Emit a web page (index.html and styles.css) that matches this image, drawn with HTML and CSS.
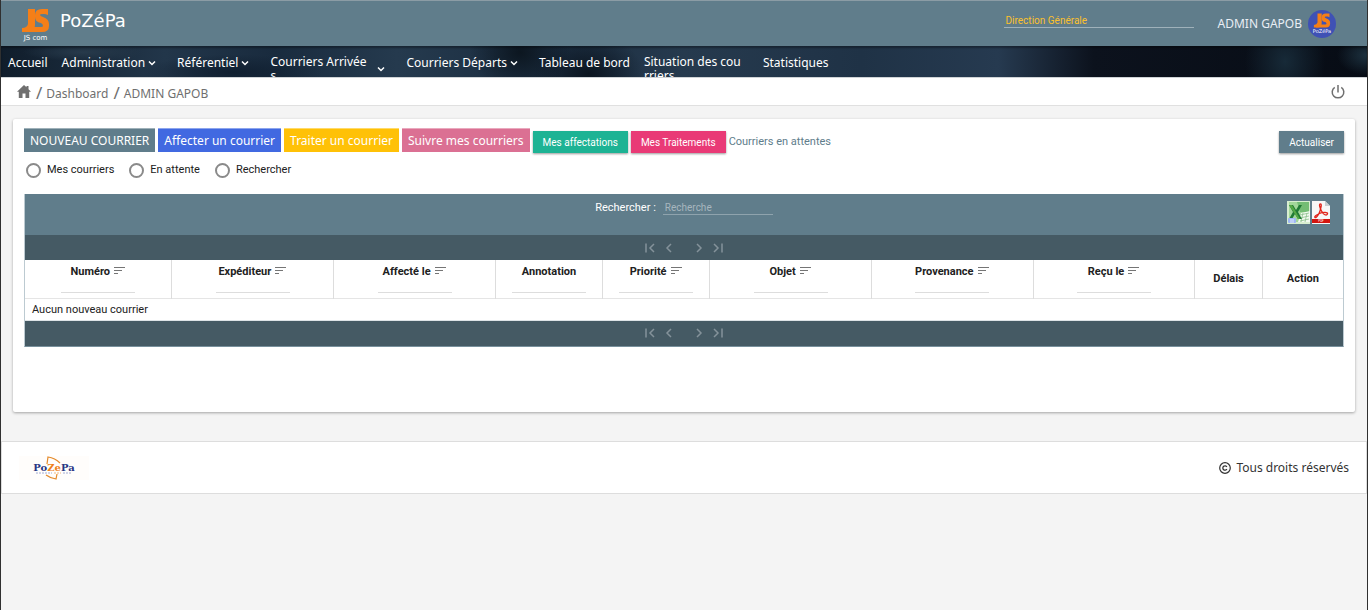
FILE: index.html
```html
<!DOCTYPE html>
<html lang="fr">
<head>
<meta charset="utf-8">
<meta name="viewport" content="width=device-width, initial-scale=1">
<title>PoZéPa</title>
<link rel="stylesheet" href="styles.css">
</head>
<body class="page">
<svg class="defs" aria-hidden="true">
  <symbol id="js" viewBox="0 0 27 25">
    <path d="M6 1h7v16q0 7-7 7H0v-4q5 0 6-4z"/>
    <path d="M26 7V1h-6q-7 0-7 6v2q0 5 6 6 2 1 2 3 0 1-2 1H8l-5 5h17q7 0 7-6v-2q0-5-6-7-3-1-3-2t2-1h3z"/>
  </symbol>
  <symbol id="chevron" viewBox="0 0 8 8"><path d="M1 2.500l3 3 3-3" fill="none" stroke="currentColor" stroke-width="1.500"/></symbol>
  <symbol id="sort" viewBox="0 0 12 8"><path d="M0 .500h11M0 3.500h8M0 6.500h4" fill="none" stroke="currentColor" stroke-width="1"/></symbol>
  <symbol id="first" viewBox="0 0 10 10"><path d="M1 .500v9M9 1L5 5l4 4" fill="none" stroke="currentColor" stroke-width="1.500"/></symbol>
  <symbol id="prev" viewBox="0 0 10 10"><path d="M7 1L3 5l4 4" fill="none" stroke="currentColor" stroke-width="1.500"/></symbol>
</svg>

<header class="topbar">
  <a class="brand" href="#">
    <span class="brand-mark"><svg class="brand-icon"><use href="#js"/></svg><span class="brand-sub">JS com</span></span>
    <span class="brand-name">PoZéPa</span>
  </a>
  <div class="account">
    <input class="direction" type="text" value="Direction Générale" aria-label="Direction">
    <span class="user">ADMIN GAPOB</span>
    <span class="avatar"><svg class="avatar-icon"><use href="#js"/></svg><span class="avatar-text">PoZéPa</span></span>
  </div>
</header>

<nav class="menu">
  <a class="menu-item" href="#">Accueil</a>
  <a class="menu-item has-sub" href="#">Administration<svg class="chevron"><use href="#chevron"/></svg></a>
  <a class="menu-item has-sub" href="#">Référentiel<svg class="chevron"><use href="#chevron"/></svg></a>
  <a class="menu-item has-sub" href="#"><span class="menu-wrap">Courriers Arrivées</span><svg class="chevron chevron-low"><use href="#chevron"/></svg></a>
  <a class="menu-item has-sub" href="#">Courriers Départs<svg class="chevron"><use href="#chevron"/></svg></a>
  <a class="menu-item" href="#">Tableau de bord</a>
  <a class="menu-item" href="#"><span class="menu-wrap">Situation des courriers</span></a>
  <a class="menu-item menu-last" href="#">Statistiques</a>
</nav>

<div class="crumbs">
  <a class="crumb-home" href="#" aria-label="Accueil"><svg class="home" viewBox="0 0 14 13"><path fill="currentColor" d="M7 0l2.500 2.300V1h2v3.200L14 6.700h-1.800V13H8.500V8.500h-3V13H1.800V6.700H0z"/></svg></a>
  <span class="slash">/</span><a class="crumb" href="#">Dashboard</a>
  <span class="slash">/</span><a class="crumb" href="#">ADMIN GAPOB</a>
  <button class="power" type="button" aria-label="Déconnexion"><svg class="power-icon" viewBox="0 0 14 14"><path d="M7 0v7.500M3.700 2.300a5.800 5.800 0 1 0 6.600 0" fill="none" stroke="currentColor" stroke-width="1.500"/></svg></button>
</div>

<main class="card">
  <div class="actions">
    <button class="flat slate" type="button">NOUVEAU COURRIER</button>
    <button class="flat blue" type="button">Affecter un courrier</button>
    <button class="flat amber" type="button">Traiter un courrier</button>
    <button class="flat rose" type="button">Suivre mes courriers</button>
    <button class="raised green" type="button">Mes affectations</button>
    <button class="raised pink" type="button">Mes Traitements</button>
    <span class="pending">Courriers en attentes</span>
    <button class="raised slate refresh" type="button">Actualiser</button>
  </div>
  <div class="filters">
    <label class="choice"><input class="radio" type="radio" name="vue">Mes courriers</label>
    <label class="choice"><input class="radio" type="radio" name="vue">En attente</label>
    <label class="choice"><input class="radio" type="radio" name="vue">Rechercher</label>
  </div>

  <section class="grid">
    <div class="grid-head">
      <label class="search-label" for="search">Rechercher :</label>
      <input class="search" id="search" type="text" placeholder="Recherche">
      <div class="exports">
        <button class="export" type="button" aria-label="Exporter Excel"><svg class="xls" viewBox="0 0 23 23">
          <rect width="23" height="23" fill="#d8eed0"/><rect x="2" y="1" width="20" height="20" fill="#a3d79a"/><path d="M10 1h12v10H13z" fill="#74bd74"/>
          <path d="M11 21l3-9 9-2v11z" fill="#f2faf0"/><path d="M13 14l9-2M13 17l9-2M13 20l9-2M16 12l-2 9M20 12l-2 9" stroke="#8cc08c" stroke-width=".8"/>
          <path d="M2 4h4l3 5 3-5h3l-4 7 4 7h-4l-3-5-3 5H2l4-7z" fill="#207a35"/><path d="M2 4h3l8 14h-2z" fill="#54a844"/>
          <rect x="1" y="17" width="8" height="5" rx="1" fill="#9fb7f5"/><path d="M3 19h4M3 21h4" stroke="#fff" stroke-width=".7"/>
        </svg></button>
        <button class="export" type="button" aria-label="Exporter PDF"><svg class="pdf" viewBox="0 0 18 23">
          <path d="M0 0h13l5 5v18H0z" fill="#f7f7f7"/><path d="M13 0v5h5z" fill="#c9cdd0"/>
          <path d="M8.500 3c-2 0-.5 4 1 7 2 4 5 5 6 3s-5-2-8-.5C4 14 2 15.500 3 16.500s4-3 5-6.500 2-7 .5-7z" fill="none" stroke="#e2231a" stroke-width="1.300"/>
          <path d="M0 18h18v4H0z" fill="#d3150f"/><text class="pdf-text" x="9" y="21" text-anchor="middle">PDF</text>
        </svg></button>
      </div>
    </div>
    <div class="pager">
      <button class="page-btn" type="button" aria-label="Première page"><svg class="page-icon"><use href="#first"/></svg></button>
      <button class="page-btn" type="button" aria-label="Page précédente"><svg class="page-icon"><use href="#prev"/></svg></button>
      <button class="page-btn page-next" type="button" aria-label="Page suivante"><svg class="page-icon flip"><use href="#prev"/></svg></button>
      <button class="page-btn" type="button" aria-label="Dernière page"><svg class="page-icon flip"><use href="#first"/></svg></button>
    </div>
    <table class="mails">
      <colgroup><col class="c-num"><col class="c-wide"><col class="c-wide"><col class="c-mid"><col class="c-mid"><col class="c-wide"><col class="c-wide"><col class="c-wide"><col class="c-delay"><col class="c-act"></colgroup>
      <thead><tr>
        <th>Numéro<svg class="sort"><use href="#sort"/></svg><input class="col-filter" type="text" aria-label="Filtrer Numéro"></th>
        <th>Expéditeur<svg class="sort"><use href="#sort"/></svg><input class="col-filter" type="text" aria-label="Filtrer Expéditeur"></th>
        <th>Affecté le<svg class="sort"><use href="#sort"/></svg><input class="col-filter" type="text" aria-label="Filtrer Affecté le"></th>
        <th>Annotation<input class="col-filter" type="text" aria-label="Filtrer Annotation"></th>
        <th>Priorité<svg class="sort"><use href="#sort"/></svg><input class="col-filter" type="text" aria-label="Filtrer Priorité"></th>
        <th>Objet<svg class="sort"><use href="#sort"/></svg><input class="col-filter" type="text" aria-label="Filtrer Objet"></th>
        <th>Provenance<svg class="sort"><use href="#sort"/></svg><input class="col-filter" type="text" aria-label="Filtrer Provenance"></th>
        <th>Reçu le<svg class="sort"><use href="#sort"/></svg><input class="col-filter" type="text" aria-label="Filtrer Reçu le"></th>
        <th>Délais</th>
        <th>Action</th>
      </tr></thead>
      <tbody><tr><td colspan="10">Aucun nouveau courrier</td></tr></tbody>
    </table>
    <div class="pager">
      <button class="page-btn" type="button" aria-label="Première page"><svg class="page-icon"><use href="#first"/></svg></button>
      <button class="page-btn" type="button" aria-label="Page précédente"><svg class="page-icon"><use href="#prev"/></svg></button>
      <button class="page-btn page-next" type="button" aria-label="Page suivante"><svg class="page-icon flip"><use href="#prev"/></svg></button>
      <button class="page-btn" type="button" aria-label="Dernière page"><svg class="page-icon flip"><use href="#first"/></svg></button>
    </div>
  </section>
</main>

<footer class="footer">
  <svg class="footer-logo" viewBox="0 0 70 24" role="img" aria-label="PoZePa">
    <rect width="70" height="24" fill="#fffdfb"/>
    <path d="M28 8l1-7q7 1 12 6M27 19q4 3 10 4l1-5" fill="none" stroke="#e58a2b" stroke-width="1.200"/>
    <text class="logo-text" x="35" y="15" text-anchor="middle">Po<tspan class="logo-accent">Ze</tspan>Pa</text>
    <path d="M17 17h16M44 17h9" stroke="#a4abd2" stroke-width="1" stroke-dasharray="2 1"/><path d="M35 17h7" stroke="#f0b981" stroke-dasharray="2 1"/>
  </svg>
  <span class="rights"><svg class="copy" viewBox="0 0 12 12"><path d="M7.900 4.800A2.200 2.200 0 1 0 7.900 7.200" fill="none" stroke="currentColor" stroke-width="1.300"/><circle cx="6" cy="6" r="5.300" fill="none" stroke="currentColor" stroke-width="1.200"/></svg>Tous droits réservés</span>
</footer>
</body>
</html>
```
FILE: styles.css
```css
* { box-sizing: border-box; }
.page {
  margin: 0;
  min-height: 100vh;
  background: #f4f4f4;
  border-left: 1px solid #303030;
  border-right: 1px solid #303030;
  font-family: Roboto, sans-serif;
  font-size: 11px;
  color: #212121;
}
a { color: inherit; text-decoration: none; }
button { border: 0; padding: 0; background: none; color: inherit; font: inherit; }
svg { flex: none; }
.defs { position: absolute; width: 0; height: 0; }

.topbar {
  display: flex;
  justify-content: space-between;
  height: 46px;
  padding: 0 31px 0 21px;
  background: #607d8b;
  border-top: 1px solid #8b9ca5;
  color: #fff;
  font-family: "DejaVu Sans", sans-serif;
}
.brand { display: flex; gap: 11px; }
.brand-mark { display: flex; flex-direction: column; align-items: center; padding-top: 7px; }
.brand-icon { width: 27px; height: 25px; fill: #f57f17; }
.brand-sub { font-size: 7px; line-height: 10px; }
.brand-name { font-size: 18px; line-height: 40px; }
.account { display: flex; align-items: center; }
.direction {
  width: 190px;
  height: 15px;
  margin: 0 24px 6px 0;
  padding: 0 2px;
  border: 0;
  border-bottom: 1px solid #9fb1ba;
  background: none;
  color: #fbc02d;
  font: 10px Roboto, sans-serif;
}
.user { font: 12px "Noto Sans", sans-serif; color: #e9eef4; }
.avatar {
  display: flex;
  flex-direction: column;
  align-items: center;
  width: 28px;
  height: 28px;
  margin-left: 6px;
  padding-top: 3px;
  border-radius: 50%;
  background: #3f51b5;
}
.avatar-icon { width: 18px; height: 15px; fill: #f57f17; }
.avatar-text { font-size: 5px; line-height: 7px; }

.menu {
  display: flex;
  gap: 14px;
  height: 31px;
  padding-left: 7px;
  overflow: hidden;
  background:
    radial-gradient(ellipse 60px 9px at 6% 20%, #273a4b, transparent),
    radial-gradient(ellipse 50px 40px at 38% 20%, #0c1620, transparent),
    radial-gradient(ellipse 55px 40px at 43% 90%, #0b1520, transparent),
    radial-gradient(ellipse 90px 18px at 17% 85%, #101f30, transparent),
    radial-gradient(ellipse 40px 50px at 94% 50%, #172a38, transparent),
    radial-gradient(ellipse 30px 20px at 100% 30%, #1d3240, transparent),
    linear-gradient(90deg, #101d2b, #22364a 12%, #192b3e 20%, #253a4e 29%, #1a2c3f 40%, #263a4e 50%, #1f3246 63%, #263a50 73%, #0c121d 80%, #070c15);
  color: #fff;
  font: 12px/14px "Noto Sans", sans-serif;
  box-shadow: inset 0 2px 2px #00000055;
}
.menu-item { display: flex; align-items: center; padding-top: 2px; white-space: nowrap; }
.has-sub { padding-right: 7px; }
.menu-wrap { width: 101px; align-self: flex-start; margin-top: 7px; white-space: normal; word-break: break-all; }
.chevron { width: 8px; height: 8px; margin-left: 3px; }
.chevron-low { margin: 12px 0 0 6px; }
.menu-last { padding-left: 4px; }

.crumbs {
  display: flex;
  align-items: center;
  height: 29px;
  padding: 3px 22px 0 16px;
  background: #fff;
  border-top: 1px solid #cfd3d6;
  border-bottom: 1px solid #e0e0e0;
  color: #6f6f6f;
  font: 12px "Noto Sans", sans-serif;
}
.home { display: block; width: 14px; height: 13px; margin-bottom: 3px; }
.slash { margin: 0 4px 0 5px; font-size: 17px; line-height: 20px; }
.power { margin-left: auto; }
.power-icon { display: block; width: 14px; height: 14px; margin-bottom: 2px; }

.card {
  min-height: 293px;
  margin: 13px 12px 29px;
  padding: 9px 11px;
  background: #fff;
  border-radius: 2px;
  box-shadow: 0 1px 3px #00000055;
}
.actions { display: flex; align-items: flex-end; gap: 3px; min-height: 25px; }
.flat {
  align-self: flex-start;
  height: 24px;
  padding: 0 6px;
  border-top: 1px solid #ffffff66;
  color: #fff;
  font: 12px "Noto Sans", sans-serif;
}
.raised { height: 22px; padding: 0 10px; color: #fff; font-size: 10px; box-shadow: 0 1px 2px #00000066; }
.slate { background-color: #607d8b; }
.blue { background-color: #4169e1; }
.amber { background-color: #ffc107; }
.rose { background-color: #db7093; }
.green { background-color: #1db394; }
.pink { background-color: #e93a76; }
.pending { color: #607d8b; line-height: 22px; }
.refresh { margin-left: auto; }
.filters { display: flex; gap: 15px; margin: 9px 0 16px 2px; }
.choice { display: flex; align-items: center; gap: 6px; line-height: 16px; }
.radio { appearance: none; width: 15px; height: 15px; margin: 0; border: 2px solid #8a8a8a; border-radius: 50%; }
.radio:checked { border-width: 5px; }

.grid { border: 1px solid #bccad1; border-top: 0; border-bottom-color: #78909c; }
.grid-head {
  display: flex;
  position: relative;
  justify-content: center;
  height: 41px;
  padding-top: 6px;
  background: #607d8b;
  color: #fff;
}
.search-label { line-height: 15px; }
.search {
  width: 110px;
  height: 15px;
  margin-left: 7px;
  padding: 0 2px;
  border: 0;
  border-bottom: 1px solid #8fa3ad;
  background: none;
  color: #fff;
  font: 10px Roboto, sans-serif;
}
.search::placeholder { color: #a7b6be; }
.exports { display: flex; gap: 2px; position: absolute; top: 7px; right: 13px; }
.export { display: block; }
.xls { display: block; width: 23px; height: 23px; }
.pdf { display: block; width: 18px; height: 23px; }
.pdf-text { font: 3px Roboto, sans-serif; fill: #fff; }
.pager { display: flex; align-items: center; justify-content: center; gap: 9px; height: 25px; background: #455a64; color: #84929a; }
.page-next { margin-left: 11px; }
.page-icon { display: block; width: 10px; height: 10px; }
.flip { transform: rotate(180deg); }

.mails { width: 100%; border-collapse: collapse; table-layout: fixed; }
.c-num { width: 11.150%; }
.c-wide { width: 12.270%; }
.c-mid { width: 8.130%; }
.c-delay { width: 5.110%; }
.c-act { width: 6.120%; }
.mails th { height: 38px; padding: 4px 0; border-left: 1px solid #ddd; line-height: 14px; }
.mails th:first-child { border-left: 0; }
.mails td { height: 22px; padding: 2px 7px 0; border-top: 1px solid #e5e5e5; border-bottom: 1px solid #dde3e6; line-height: 18px; }
.sort { width: 12px; height: 8px; margin-left: 4px; color: #757575; }
.col-filter { display: block; width: 74px; height: 14px; margin: 0 auto; padding: 0; border: 0; border-bottom: 1px solid #ddd; background: none; font: 10px Roboto, sans-serif; }

.footer {
  display: flex;
  align-items: center;
  justify-content: space-between;
  height: 53px;
  padding: 0 17px;
  background: #fff;
  border: 1px solid #ddd;
}
.footer-logo { width: 70px; height: 24px; }
.logo-text { font: bold 10px "DejaVu Serif", serif; fill: #283583; }
.logo-accent { fill: #ee7f1a; }
.rights { display: flex; align-items: center; gap: 5px; font: 12px "Noto Sans", sans-serif; color: #333; }
.copy { width: 12px; height: 12px; }
```
